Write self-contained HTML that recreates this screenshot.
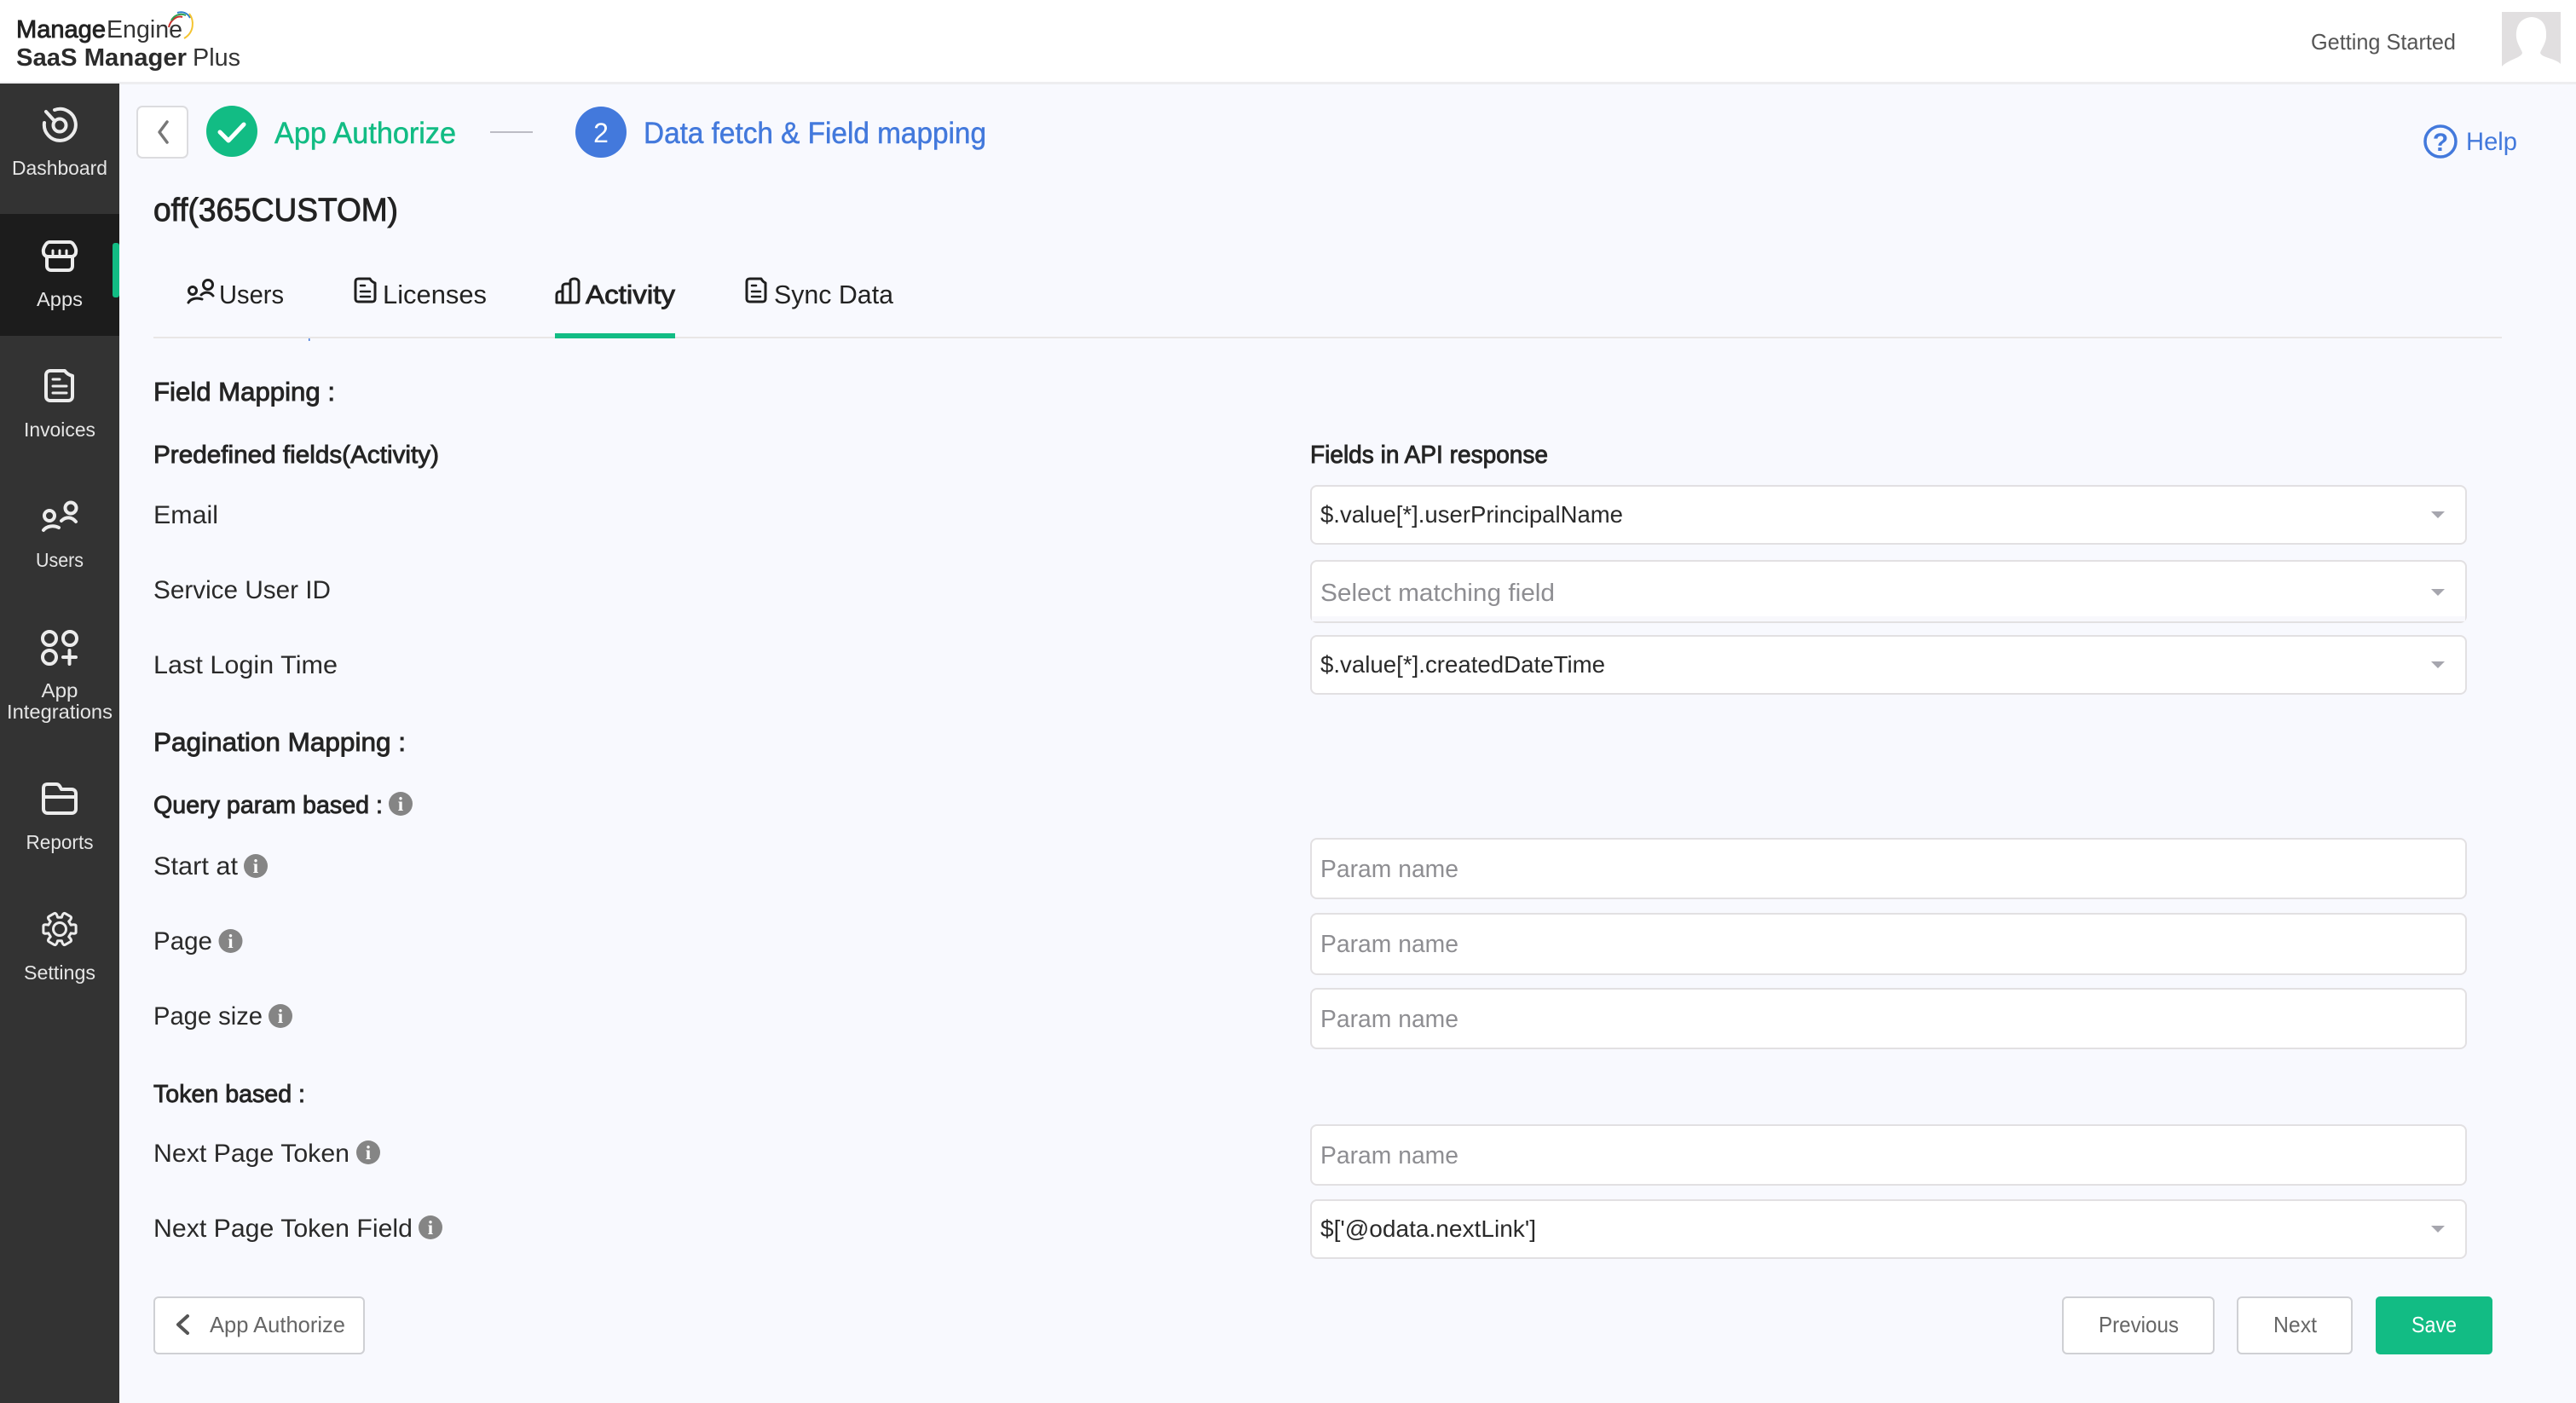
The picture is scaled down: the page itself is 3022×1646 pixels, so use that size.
<!DOCTYPE html>
<html lang="en">
<head>
<meta charset="utf-8">
<title>SaaS Manager Plus</title>
<style>
html,body{margin:0;padding:0;background:#f8f9fe;overflow:hidden}
svg{display:block}
text{font-family:"Liberation Sans",sans-serif;white-space:pre}
.m{stroke:currentColor;stroke-width:.9}
</style>
</head>
<body>
<svg xmlns="http://www.w3.org/2000/svg" width="3022" height="1646" viewBox="0 0 3022 1646">
<rect width="3022" height="1646" fill="#f8f9fe"/>

<!-- header -->
<rect width="3022" height="97" fill="#fff"/>
<rect y="96" width="3022" height="3" fill="#eeeef0"/>
<text x="19" y="44" font-size="29" fill="#222" class="m" style="color:#222" textLength="105" lengthAdjust="spacingAndGlyphs">Manage</text>
<text x="125" y="44" font-size="29" fill="#333" textLength="89" lengthAdjust="spacingAndGlyphs">Engine</text>
<text x="19" y="77" font-size="29" font-weight="700" fill="#2b2b2b" textLength="200" lengthAdjust="spacingAndGlyphs">SaaS Manager</text>
<text x="226" y="77" font-size="29" fill="#333" textLength="56" lengthAdjust="spacingAndGlyphs">Plus</text>
<g fill="none" stroke-width="2">
<path d="M198 32 C200 23 208 18 214 20" stroke="#c9302c"/>
<path d="M201 24 C204 18 211 15 218 18" stroke="#2e9e4f"/>
<path d="M208 15 C214 13 220 15 223 21" stroke="#2a7fc9"/>
<path d="M222 16 C228 24 228 38 216 45" stroke="#f4c430"/>
</g>
<text x="2711" y="58" font-size="26" fill="#555" textLength="170" lengthAdjust="spacingAndGlyphs">Getting Started</text>
<rect x="2935" y="14" width="69" height="64" fill="#e1dfe0"/>
<path d="M2935 78 C2942 70 2958 68 2959 62 C2958 58 2953 52 2952 44 C2951 30 2957 21 2970 20 C2983 21 2988 30 2987 44 C2986 52 2981 58 2980 62 C2982 68 2997 68 3004 75 L3004 78 Z" fill="#fff"/>

<!-- sidebar -->
<rect y="98" width="140" height="1548" fill="#333"/>
<rect y="251" width="140" height="143" fill="#1c1c1c"/>
<rect x="132" y="285" width="8" height="64" rx="3" fill="#12bc84"/>

<g fill="none" stroke="#ececec" stroke-width="4" stroke-linecap="round" stroke-linejoin="round">
<!-- dashboard -->
<path d="M64 129 A18.5 18.5 0 1 1 52 144"/>
<circle cx="70" cy="147" r="7.5"/>
<path d="M54 131 L64 142"/>
<!-- apps -->
<path d="M58 284 H82 C86 284 90 292 89 296 C89 299 86 301 84 301 H56 C54 301 51 299 51 296 C50 292 54 284 58 284 Z"/>
<path d="M55 301 V312 C55 315 57 317 60 317 H80 C83 317 85 315 85 312 V301"/>
<path d="M62 294 V298 M70 294 V298 M78 294 V298" stroke-width="3"/>
<!-- invoices -->
<path d="M59 435 H76 C78 438 81 440 85 441 V465 C85 468 83 470 80 470 H59 C56 470 54 468 54 465 V440 C54 437 56 435 59 435 Z"/>
<path d="M62 445 H70 M62 453 H78 M62 461 H78" stroke-width="3"/>
<!-- users -->
<circle cx="58" cy="605" r="6"/>
<path d="M51 622 C55 617 63 616 69 619"/>
<circle cx="83" cy="596" r="6.500"/>
<path d="M72 611 C77 606 84 606 89 612"/>
<!-- app integrations -->
<circle cx="58" cy="749" r="8"/>
<circle cx="82" cy="749" r="8"/>
<circle cx="58" cy="771" r="8"/>
<path d="M74 771 H89 M81.500 763 V779"/>
<!-- reports -->
<path d="M51 925 C51 921 53 920 56 920 H66 C69 920 70 922 72 926 H84 C87 926 89 928 89 931 V949 C89 952 87 954 84 954 H56 C53 954 51 952 51 949 Z"/>
<path d="M51 935 H89"/>
<!-- settings -->
<g transform="translate(70 1090)" stroke-width="3">
<path d="M13.200 -4.800 Q19.100 -6 19.100 -3.700 L19.100 3.700 Q19.100 6 13.200 4.800 L10.700 9 Q15 13 12.800 14.700 L6.300 18.400 Q3.800 19.500 2.400 13.800 L-2.400 13.800 Q-3.800 19.500 -6.300 18.400 L-12.800 14.700 Q-15 13 -10.700 9 L-13.200 4.800 Q-19.100 6 -19.100 3.700 L-19.100 -3.700 Q-19.100 -6 -13.200 -4.800 L-10.700 -9 Q-15 -13 -12.800 -14.700 L-6.300 -18.400 Q-3.800 -19.500 -2.400 -13.800 L2.400 -13.800 Q3.800 -19.500 6.300 -18.400 L12.800 -14.700 Q15 -13 10.700 -9 Z"/>
<circle r="7.500"/>
</g>
</g>

<g font-size="23" fill="#e6e6e6" text-anchor="middle">
<text x="70" y="205" textLength="112" lengthAdjust="spacingAndGlyphs">Dashboard</text>
<text x="70" y="359" textLength="54" lengthAdjust="spacingAndGlyphs">Apps</text>
<text x="70" y="512" textLength="84" lengthAdjust="spacingAndGlyphs">Invoices</text>
<text x="70" y="665" textLength="56" lengthAdjust="spacingAndGlyphs">Users</text>
<text x="70" y="818" textLength="43" lengthAdjust="spacingAndGlyphs">App</text>
<text x="70" y="843" textLength="124" lengthAdjust="spacingAndGlyphs">Integrations</text>
<text x="70" y="996" textLength="79" lengthAdjust="spacingAndGlyphs">Reports</text>
<text x="70" y="1149" textLength="84" lengthAdjust="spacingAndGlyphs">Settings</text>
</g>

<!-- stepper -->
<rect x="161" y="125" width="59" height="60" rx="6" fill="#fff" stroke="#dcdcdf" stroke-width="2"/>
<path d="M196 143 L187 155 L196 167" fill="none" stroke="#777" stroke-width="3.500" stroke-linecap="round" stroke-linejoin="round"/>
<circle cx="272" cy="154" r="30" fill="#12bc84"/>
<path d="M258 155 L268 165 L286 146" fill="none" stroke="#fff" stroke-width="5" stroke-linecap="round" stroke-linejoin="round"/>
<text x="322" y="168" font-size="35" fill="#12bc84" stroke="#12bc84" stroke-width=".5" textLength="213" lengthAdjust="spacingAndGlyphs">App Authorize</text>
<rect x="575" y="154" width="50" height="2" fill="#bcbcc4"/>
<circle cx="705" cy="155" r="30" fill="#4379dc"/>
<text x="705" y="167" font-size="32" fill="#fff" text-anchor="middle">2</text>
<text x="755" y="168" font-size="35" fill="#4379dc" stroke="#4379dc" stroke-width=".5" textLength="402" lengthAdjust="spacingAndGlyphs">Data fetch &amp; Field mapping</text>

<!-- help -->
<circle cx="2863" cy="166" r="18" fill="none" stroke="#4379dc" stroke-width="3.500"/>
<text x="2863" y="177" font-size="30" font-weight="700" fill="#4379dc" text-anchor="middle">?</text>
<text x="2893" y="176" font-size="30" fill="#4379dc" textLength="60" lengthAdjust="spacingAndGlyphs">Help</text>

<!-- title -->
<text x="180" y="259" font-size="38" fill="#222" class="m" style="color:#222" textLength="287" lengthAdjust="spacingAndGlyphs">off(365CUSTOM)</text>

<!-- tabs -->
<rect x="180" y="395" width="2755" height="2" fill="#e9e6e6"/>
<rect x="362" y="397" width="1.500" height="3" fill="#4379dc"/>
<g fill="none" stroke="#1f1f1f" stroke-width="3" stroke-linecap="round" stroke-linejoin="round">
<circle cx="226" cy="341" r="4.500"/>
<path d="M221 355 C224 350 231 349 237 351"/>
<circle cx="244" cy="334" r="5.500"/>
<path d="M236 346 C240 342 246 342 250 347"/>
<path d="M421 327 H434 C435 329 437 331 440 332 V350 C440 353 439 354 436 354 H421 C418 354 417 353 417 350 V331 C417 328 418 327 421 327 Z"/>
<path d="M423 335 H428 M423 342 H434 M423 348 H434" stroke-width="2.500"/>
<path d="M653 346 C653 343 655 342 657 342 H660 V355 H653 Z"/>
<path d="M660 336 C660 334 662 333 664 333 H669 V355 H660 Z"/>
<path d="M669 330 C669 328 671 327 674 327 C677 327 679 329 679 331 V352 C679 354 678 355 676 355 H669 Z"/>
<path d="M880 327 H893 C894 329 896 331 898 332 V350 C898 353 897 354 894 354 H880 C877 354 876 353 876 350 V331 C876 328 877 327 880 327 Z"/>
<path d="M882 335 H887 M882 342 H892 M882 348 H892" stroke-width="2.500"/>
</g>
<g font-size="31" fill="#222">
<text x="257" y="356" textLength="76" lengthAdjust="spacingAndGlyphs">Users</text>
<text x="449" y="356" textLength="122" lengthAdjust="spacingAndGlyphs">Licenses</text>
<text x="687" y="356" class="m" style="color:#222" textLength="105" lengthAdjust="spacingAndGlyphs">Activity</text>
<text x="908" y="356" textLength="140" lengthAdjust="spacingAndGlyphs">Sync Data</text>
</g>
<rect x="651" y="391" width="141" height="6" fill="#12bc84"/>

<!-- headings -->
<g fill="#242424" class="m" style="color:#242424">
<text x="180" y="470" font-size="31" textLength="213" lengthAdjust="spacingAndGlyphs">Field Mapping :</text>
<text x="180" y="543" font-size="29" textLength="335" lengthAdjust="spacingAndGlyphs">Predefined fields(Activity)</text>
<text x="1537" y="543" font-size="29" textLength="279" lengthAdjust="spacingAndGlyphs">Fields in API response</text>
<text x="180" y="881" font-size="31" textLength="296" lengthAdjust="spacingAndGlyphs">Pagination Mapping :</text>
<text x="180" y="954" font-size="29" textLength="269" lengthAdjust="spacingAndGlyphs">Query param based :</text>
<text x="180" y="1293" font-size="29" textLength="178" lengthAdjust="spacingAndGlyphs">Token based :</text>
</g>

<!-- labels -->
<g font-size="30" fill="#2a2a2a">
<text x="180" y="614" textLength="76" lengthAdjust="spacingAndGlyphs">Email</text>
<text x="180" y="702" textLength="208" lengthAdjust="spacingAndGlyphs">Service User ID</text>
<text x="180" y="790" textLength="216" lengthAdjust="spacingAndGlyphs">Last Login Time</text>
<text x="180" y="1026" textLength="99" lengthAdjust="spacingAndGlyphs">Start at</text>
<text x="180" y="1114" textLength="69" lengthAdjust="spacingAndGlyphs">Page</text>
<text x="180" y="1202" textLength="128" lengthAdjust="spacingAndGlyphs">Page size</text>
<text x="180" y="1363" textLength="230" lengthAdjust="spacingAndGlyphs">Next Page Token</text>
<text x="180" y="1451" textLength="304" lengthAdjust="spacingAndGlyphs">Next Page Token Field</text>
</g>

<!-- info icons -->
<g fill="#858585">
<circle cx="470" cy="943" r="14"/><circle cx="300" cy="1016" r="14"/><circle cx="270.500" cy="1104" r="14"/><circle cx="329" cy="1192" r="14"/><circle cx="432" cy="1352" r="14"/><circle cx="505" cy="1440" r="14"/>
</g>
<g font-size="23" font-weight="700" fill="#fff" text-anchor="middle">
<text x="470" y="951" style="font-family:'Liberation Serif',serif">i</text>
<text x="300" y="1024" style="font-family:'Liberation Serif',serif">i</text>
<text x="270.500" y="1112" style="font-family:'Liberation Serif',serif">i</text>
<text x="329" y="1200" style="font-family:'Liberation Serif',serif">i</text>
<text x="432" y="1360" style="font-family:'Liberation Serif',serif">i</text>
<text x="505" y="1448" style="font-family:'Liberation Serif',serif">i</text>
</g>

<!-- inputs -->
<g fill="#fff" stroke="#e2e0e2" stroke-width="2">
<rect x="1538" y="570" width="1355" height="68" rx="7"/>
<rect x="1538" y="658" width="1355" height="72" rx="7"/>
<rect x="1538" y="746" width="1355" height="68" rx="7"/>
<rect x="1538" y="984" width="1355" height="70" rx="7"/>
<rect x="1538" y="1072" width="1355" height="71" rx="7"/>
<rect x="1538" y="1160" width="1355" height="70" rx="7"/>
<rect x="1538" y="1320" width="1355" height="70" rx="7"/>
<rect x="1538" y="1408" width="1355" height="68" rx="7"/>
</g>
<rect x="1539" y="723" width="1353" height="6" fill="#f8f8fc"/>
<g fill="#a6a6ae">
<path d="M2852 600 H2868 L2860 608 Z"/>
<path d="M2852 691 H2868 L2860 699 Z"/>
<path d="M2852 776 H2868 L2860 784 Z"/>
<path d="M2852 1438 H2868 L2860 1446 Z"/>
</g>
<g font-size="28" fill="#2a2a2a">
<text x="1549" y="613" textLength="355" lengthAdjust="spacingAndGlyphs">$.value[*].userPrincipalName</text>
<text x="1549" y="789" textLength="334" lengthAdjust="spacingAndGlyphs">$.value[*].createdDateTime</text>
<text x="1549" y="1451" textLength="253" lengthAdjust="spacingAndGlyphs">$['@odata.nextLink']</text>
</g>
<g font-size="29" fill="#8e8e92">
<text x="1549" y="705" textLength="275" lengthAdjust="spacingAndGlyphs">Select matching field</text>
<text x="1549" y="1029" textLength="162" lengthAdjust="spacingAndGlyphs">Param name</text>
<text x="1549" y="1117" textLength="162" lengthAdjust="spacingAndGlyphs">Param name</text>
<text x="1549" y="1205" textLength="162" lengthAdjust="spacingAndGlyphs">Param name</text>
<text x="1549" y="1365" textLength="162" lengthAdjust="spacingAndGlyphs">Param name</text>
</g>

<!-- buttons -->
<g fill="#fff" stroke="#cfd0d4" stroke-width="2">
<rect x="181" y="1522" width="246" height="66" rx="5"/>
<rect x="2420" y="1522" width="177" height="66" rx="5"/>
<rect x="2625" y="1522" width="134" height="66" rx="5"/>
</g>
<rect x="2787" y="1521" width="137" height="68" rx="5" fill="#12bc84"/>
<path d="M220 1544 L209 1554 L220 1564" fill="none" stroke="#555" stroke-width="4" stroke-linecap="round" stroke-linejoin="round"/>
<g font-size="26" fill="#666">
<text x="246" y="1563" textLength="159" lengthAdjust="spacingAndGlyphs">App Authorize</text>
<text x="2462" y="1563" textLength="94" lengthAdjust="spacingAndGlyphs">Previous</text>
<text x="2667" y="1563" textLength="51" lengthAdjust="spacingAndGlyphs">Next</text>
</g>
<text x="2829" y="1563" font-size="26" fill="#fff" textLength="53" lengthAdjust="spacingAndGlyphs">Save</text>
</svg>
</body>
</html>
